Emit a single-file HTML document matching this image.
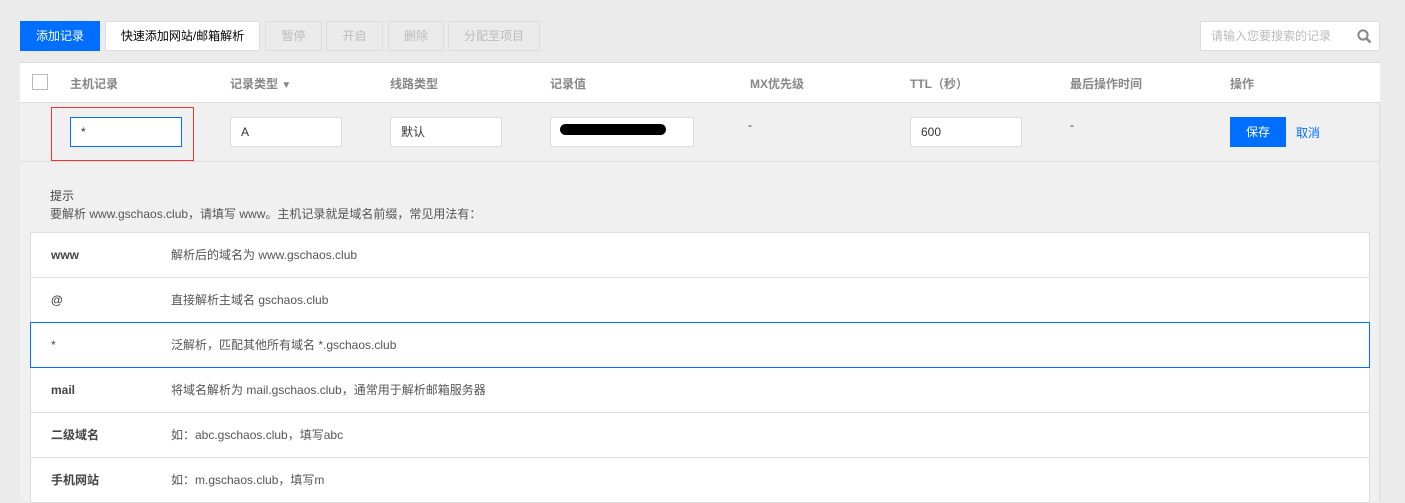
<!DOCTYPE html>
<html><head><meta charset="utf-8"><style>
*{box-sizing:border-box;margin:0;padding:0}
body{width:1405px;height:502px;overflow:hidden;background:#ebebeb;font-family:"Liberation Sans","Noto Sans CJK SC",sans-serif;font-size:12px;color:#444;position:relative}
.a{position:absolute}
.btn{position:absolute;top:21px;height:30px;line-height:28px;border:1px solid #ddd;text-align:center;font-size:12px}
.dis{color:#bbb;background:#ebebeb}
.hd{color:#888;font-weight:bold;top:75px;position:absolute}
.inp{position:absolute;top:117px;height:30px;background:#fff;border:1px solid #ddd;line-height:28px;padding-left:10px;color:#333}
.row{position:absolute;left:30px;width:1340px;height:46px;background:#fff;border:1px solid #ddd}
.row b{position:absolute;left:20px;top:0;line-height:44px;color:#444}
.row span{position:absolute;left:140px;top:0;line-height:44px;color:#555}
</style></head><body>
<div class="btn" style="left:20px;width:80px;background:#006eff;color:#fff;border-color:#006eff">添加记录</div>
<div class="btn" style="left:105px;width:155px;background:#fff;color:#000">快速添加网站/邮箱解析</div>
<div class="btn dis" style="left:265px;width:57px">暂停</div>
<div class="btn dis" style="left:326px;width:57px">开启</div>
<div class="btn dis" style="left:388px;width:56px">删除</div>
<div class="btn dis" style="left:448px;width:92px">分配至项目</div>
<div class="btn" style="left:1200px;width:180px;background:#fff;color:#bbb;text-align:left;padding-left:10px">请输入您要搜索的记录
<svg class="a" style="right:7px;top:7px" width="15" height="15" viewBox="0 0 15 15"><circle cx="6" cy="6" r="4.6" fill="none" stroke="#888" stroke-width="2"/><path d="M9.5 9.5L13.5 13.5" stroke="#888" stroke-width="2.4"/></svg></div>

<div class="a" style="left:20px;top:62px;width:1360px;height:440px;background:#f0f0f0;border-right:1px solid #ddd"></div>
<div class="a" style="left:20px;top:62px;width:1360px;height:41px;background:#fff;border-top:1px solid #ddd;border-bottom:1px solid #ddd"></div>
<div class="a" style="left:32px;top:74px;width:16px;height:16px;border:1px solid #bbb;background:#fff"></div>
<div class="hd" style="left:70px">主机记录</div>
<div class="hd" style="left:230px">记录类型 <span style="font-size:10px">▼</span></div>
<div class="hd" style="left:390px">线路类型</div>
<div class="hd" style="left:550px">记录值</div>
<div class="hd" style="left:750px">MX优先级</div>
<div class="hd" style="left:910px">TTL（秒）</div>
<div class="hd" style="left:1070px">最后操作时间</div>
<div class="hd" style="left:1230px">操作</div>
<div class="a" style="left:20px;top:161px;width:1360px;height:1px;background:#ddd"></div>

<div class="a" style="left:51px;top:107px;width:143px;height:54px;border:1px solid #e33"></div>
<div class="inp" style="left:70px;width:112px;border-color:#006eff">*</div>
<div class="inp" style="left:230px;width:112px">A</div>
<div class="inp" style="left:390px;width:112px">默认</div>
<div class="inp" style="left:550px;width:144px"></div>
<div class="a" style="left:560px;top:124px;width:106px;height:11px;background:#000;border-radius:6px"></div>
<div class="a" style="left:748px;top:118px;color:#333">-</div>
<div class="inp" style="left:910px;width:112px">600</div>
<div class="a" style="left:1070px;top:118px;color:#333">-</div>
<div class="a" style="left:1230px;top:117px;width:56px;height:30px;background:#006eff;color:#fff;text-align:center;line-height:30px">保存</div>
<div class="a" style="left:1296px;top:124px;color:#006eff">取消</div>

<div class="a" style="left:50px;top:187px;color:#444">提示</div>
<div class="a" style="left:50px;top:205px;color:#555">要解析 www.gschaos.club，请填写 www。主机记录就是域名前缀，常见用法有：</div>

<div class="row" style="top:232px"><b>www</b><span>解析后的域名为 www.gschaos.club</span></div>
<div class="row" style="top:277px"><b>@</b><span>直接解析主域名 gschaos.club</span></div>
<div class="row" style="top:412px"><b>二级域名</b><span>如：abc.gschaos.club，填写abc</span></div>
<div class="row" style="top:457px"><b>手机网站</b><span>如：m.gschaos.club，填写m</span></div>
<div class="row" style="top:367px"><b>mail</b><span>将域名解析为 mail.gschaos.club，通常用于解析邮箱服务器</span></div>
<div class="row" style="top:322px;border-color:#006eff"><b style="font-weight:normal">*</b><span>泛解析，匹配其他所有域名 *.gschaos.club</span></div>
</body></html>
